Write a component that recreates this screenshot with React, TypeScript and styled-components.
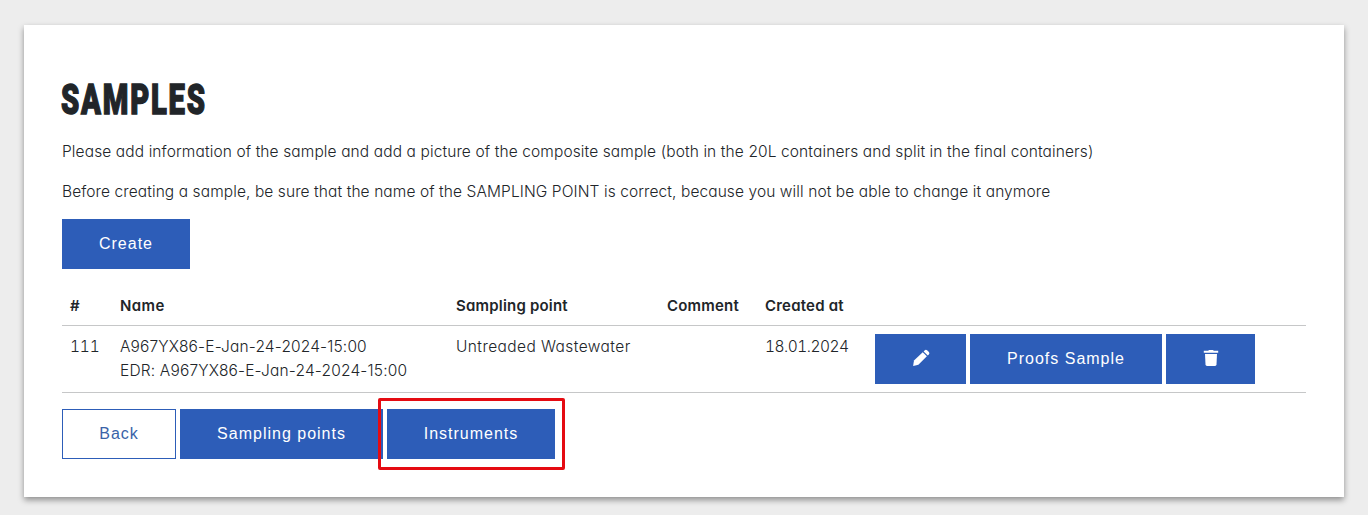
import React from "react";
import styled, { createGlobalStyle } from "styled-components";

const GlobalStyle = createGlobalStyle`
  * { box-sizing: border-box; }
  body {
    margin: 0;
    background: #ededed;
    color: #212529;
    font: 400 15px/24px Inter, "Open Sans", sans-serif;
    font-feature-settings: "cv11" 1, "calt" 0;
  }
`;

const Page = styled.div`
  height: 515px;
  padding: 25px 24px 18px;
  overflow: hidden;
`;

const Card = styled.main`
  height: 472px;
  padding: 38px;
  background: #fff;
  box-shadow: 0 3px 6px rgba(0, 0, 0, 0.4);
`;

const Title = styled.h1`
  margin: 0 0 9px -1px;
  height: 68px;
  padding-top: 5px;
  width: max-content;
  font: 900 42px/64px Roboto, sans-serif;
  letter-spacing: 2.6px;
  -webkit-text-stroke: 1.4px #212529;
  transform: scaleX(0.695);
  transform-origin: left;
`;

const Text = styled.span<{ $spacing?: number; $tabular?: boolean }>`
  display: block;
  width: max-content;
  letter-spacing: ${(p) => p.$spacing ?? 0}px;
  font-variant-numeric: ${(p) => (p.$tabular ? "tabular-nums" : "normal")};
`;

const Paragraph = styled.p`
  margin: 0 0 16px;
  font-size: 15.5px;
  font-weight: 300;
`;

const Button = styled.button<{ $width: number; $outline?: boolean }>`
  display: flex;
  align-items: center;
  justify-content: center;
  flex: none;
  width: ${(p) => p.$width}px;
  height: 50px;
  padding: 0;
  border: 1px solid #2d5db8;
  background: ${(p) => (p.$outline ? "#fff" : "#2d5db8")};
  color: ${(p) => (p.$outline ? "#3a63a8" : "#fff")};
  font: 400 16px/24px "Liberation Sans", Arial, sans-serif;
  letter-spacing: 1px;
`;

const CreateButton = styled(Button)`
  margin-top: -1px;
`;

const ButtonRow = styled.div`
  display: flex;
  gap: 4px;
`;

const Table = styled.table`
  width: 1244px;
  margin: 16px 0;
  table-layout: fixed;
  border-collapse: separate;
  border-spacing: 0;
`;

const Head = styled.th`
  height: 41px;
  padding: 9px 8px 7px;
  border-bottom: 1px solid #c6c7c8;
  text-align: left;
  font-weight: 600;
  white-space: nowrap;
`;

const Cell = styled.td<{ $actions?: boolean }>`
  height: 67px;
  padding: ${(p) => (p.$actions ? "8px" : "9px 8px 7px")};
  border-bottom: 1px solid #c6c7c8;
  vertical-align: top;
  font-size: 15.5px;
  font-weight: 300;
  white-space: nowrap;
`;

const Highlighted = styled.div`
  position: relative;
  display: flex;
  &::after {
    content: "";
    position: absolute;
    inset: -11px -10px -11px -9px;
    border: 3px solid #e50b12;
    border-radius: 2px;
  }
`;

const Icon = styled.svg`
  display: block;
  margin: -2px 0 0 0;
  fill: #fff;
`;

const PencilIcon = () => (
  <Icon width="18" height="18" viewBox="0 0 18 18">
    <path d="M10.7 3.2 14.9 7.2 6.4 15.7 1.1 17 2 11.4Z" />
    <path d="M11.6 2.4 12.6 1.4Q13.9.3 15.3 1.5L16.9 3.1Q18 4.4 16.8 5.6L15.8 6.5Z" />
  </Icon>
);

const TrashIcon = () => (
  <Icon width="16" height="18" viewBox="0 0 16 18">
    <path d="M.8 1.8H5.2L6 .9H10L10.8 1.8H15.2V3.8H.8Z" />
    <path d="M2 5H14L13.5 15.6Q13.4 17 12 17H4Q2.6 17 2.5 15.6Z" />
  </Icon>
);

const columns = [
  { label: "#", width: 50, spacing: 0 },
  { label: "Name", width: 336, spacing: 0.4 },
  { label: "Sampling point", width: 211, spacing: 0.2 },
  { label: "Comment", width: 98, spacing: 0.2 },
  { label: "Created at", width: 110, spacing: 0.2 },
  { label: "", width: 439, spacing: 0 },
];

export default function App() {
  return (
    <Page>
      <GlobalStyle />
      <Card>
        <Title>SAMPLES</Title>
        <Paragraph>
          <Text $spacing={0.115}>Please add information of the sample and add a picture of the composite sample (both in the 20L containers and split in the final containers)</Text>
        </Paragraph>
        <Paragraph>
          <Text $spacing={0.095}>Before creating a sample, be sure that the name of the SAMPLING POINT is correct, because you will not be able to change it anymore</Text>
        </Paragraph>
        <CreateButton $width={128}>Create</CreateButton>
        <Table>
          <colgroup>
            {columns.map((c) => <col key={c.label} width={c.width} />)}
          </colgroup>
          <thead>
            <tr>
              {columns.map((c) => <Head key={c.label}><Text $spacing={c.spacing}>{c.label}</Text></Head>)}
            </tr>
          </thead>
          <tbody>
            <tr>
              <Cell><Text $tabular $spacing={-0.2}>111</Text></Cell>
              <Cell>
                <Text $spacing={0.15}>A967YX86-E-Jan-24-2024-15:00</Text>
                <Text $spacing={0.17}>EDR: A967YX86-E-Jan-24-2024-15:00</Text>
              </Cell>
              <Cell><Text $spacing={0.42}>Untreaded Wastewater</Text></Cell>
              <Cell />
              <Cell><Text $tabular $spacing={-0.5}>18.01.2024</Text></Cell>
              <Cell $actions>
                <ButtonRow>
                  <Button $width={91} aria-label="Edit"><PencilIcon /></Button>
                  <Button $width={192}>Proofs Sample</Button>
                  <Button $width={89} aria-label="Delete"><TrashIcon /></Button>
                </ButtonRow>
              </Cell>
            </tr>
          </tbody>
        </Table>
        <ButtonRow>
          <Button $width={114} $outline>Back</Button>
          <Button $width={203}>Sampling points</Button>
          <Highlighted>
            <Button $width={168}>Instruments</Button>
          </Highlighted>
        </ButtonRow>
      </Card>
    </Page>
  );
}
